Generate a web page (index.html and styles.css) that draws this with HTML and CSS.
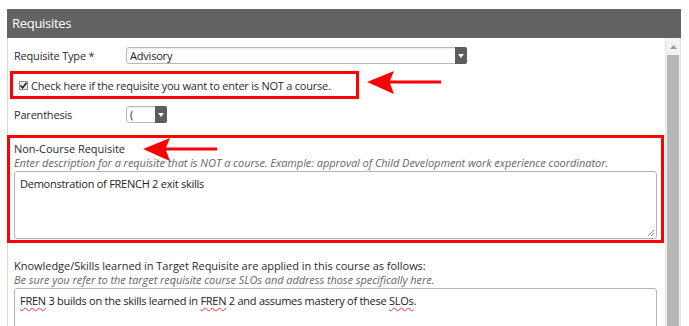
FILE: index.html
```html
<!DOCTYPE html>
<html>
<head>
<meta charset="utf-8">
<link rel="stylesheet" href="styles.css">
</head>
<body>
<div class="page">
  <div class="header">Requisites</div>
  <div class="panel">
    <div class="content">
      <div class="row row-type">
        <span class="lbl">Requisite Type *</span>
        <div class="select select-wide">
          <span class="val">Advisory</span>
          <span class="btn"><svg width="6" height="4" viewBox="0 0 6 4"><path d="M0 0H6L3 4Z" fill="#fff"/></svg></span>
        </div>
      </div>
      <div class="mark mark-check">
        <span class="cb"><svg width="9" height="9" viewBox="0 0 9 9"><path d="M1.5 4.5L3.6 6.8L7.6 1.8" fill="none" stroke="#222" stroke-width="1.6"/></svg></span>
        <span class="cbtext">Check here if the requisite you want to enter is NOT a course.</span>
      </div>
      <div class="row row-paren">
        <span class="lbl">Parenthesis</span>
        <div class="select select-narrow">
          <span class="val">(</span>
          <span class="btn"><svg width="6" height="4" viewBox="0 0 6 4"><path d="M0 0H6L3 4Z" fill="#fff"/></svg></span>
        </div>
      </div>
      <div class="mark mark-noncourse">
        <div class="flabel">Non-Course Requisite</div>
        <div class="hint">Enter description for a requisite that is NOT a course. Example: approval of Child Development work experience coordinator.</div>
        <div class="ta ta-noncourse">Demonstration of FRENCH 2 exit skills
          <svg class="grip" width="8" height="8" viewBox="0 0 8 8"><path d="M7 1L1 7M7 4L4 7" stroke="#888" stroke-width="1"/></svg>
        </div>
      </div>
      <div class="field">
        <div class="flabel">Knowledge/Skills learned in Target Requisite are applied in this course as follows:</div>
        <div class="hint">Be sure you refer to the target requisite course SLOs and address those specifically here.</div>
        <div class="ta ta-skills"><span class="sp">FREN</span> 3 builds on the skills learned in <span class="sp">FREN</span> 2 and assumes mastery of these <span class="sp">SLOs</span>.</div>
      </div>
    </div>
    <div class="scrollbar">
      <div class="sb-up"><svg width="7" height="4" viewBox="0 0 7 4"><path d="M0 4H7L3.5 0Z" fill="#999"/></svg></div>
      <div class="sb-thumb"></div>
    </div>
  </div>
  <svg class="arrow arrow-check" width="76" height="24" viewBox="0 0 76 24"><path d="M0 11L27 0L23 9.5H74V12.5H23L27 23Z" fill="#f00"/></svg>
  <svg class="arrow arrow-noncourse" width="76" height="24" viewBox="0 0 76 24"><path d="M0 11L27 0L23 9.5H74V12.5H23L27 23Z" fill="#f00"/></svg>
</div>
</body>
</html>
```
FILE: styles.css
```css
html, body {
  margin: 0;
  padding: 0;
  background: #fff;
}
.page {
  position: relative;
  width: 689px;
  height: 326px;
  overflow: hidden;
  padding-top: 9px;
  box-sizing: border-box;
  font-family: "Open Sans", "Noto Sans", sans-serif;
  font-size: 11px;
  color: #2b2b2b;
}
.header {
  margin-left: 7px;
  width: 674px;
  height: 29px;
  box-sizing: border-box;
  background: #636363;
  color: #fff;
  font-size: 13px;
  line-height: 29px;
  padding-left: 5px;
  letter-spacing: -0.3px;
}
.panel {
  margin-left: 7px;
  width: 674px;
  height: 288px;
  display: flex;
  border-left: 1px solid #d9d9d9;
  box-sizing: border-box;
}
.content {
  flex: 1;
  min-width: 0;
}
.row {
  display: grid;
  grid-template-columns: 112px auto;
  align-items: center;
  padding-left: 6px;
  height: 17px;
}
.row-type { margin-top: 9px; }
.row-paren { margin-top: 7px; }
.lbl {
  letter-spacing: -0.2px;
}
.select {
  height: 17px;
  box-sizing: border-box;
  border: 1px solid #b9b9b9;
  border-radius: 3px;
  display: flex;
  align-items: stretch;
  background: #fff;
  box-shadow: inset 0 1px 1px rgba(0,0,0,0.08);
}
.select-wide { width: 341px; }
.select-narrow { width: 41px; }
.select .val {
  flex: 1;
  padding-left: 3px;
  line-height: 15px;
  color: #222;
  letter-spacing: -0.2px;
}
.select .btn {
  width: 12px;
  background: #5d5d5d;
  border-radius: 0 2px 2px 0;
  margin: -1px -1px -1px 0;
  display: flex;
  align-items: center;
  justify-content: center;
}
.mark {
  border: 3px solid #f00;
  box-sizing: border-box;
}
.mark-check {
  margin-top: 7px;
  margin-left: 2px;
  width: 349px;
  height: 28px;
  display: flex;
  align-items: center;
  padding-left: 6px;
  gap: 3px;
}
.cb {
  width: 9px;
  height: 9px;
  box-sizing: border-box;
  border: 1px solid #8c8c8c;
  background: #e9e9e9;
  display: flex;
  margin-top: 1px;
}
.cb svg { margin: -1px; }
.cbtext {
  letter-spacing: -0.23px;
}
.mark-noncourse {
  margin-top: 12px;
  margin-left: -1px;
  width: 657px;
  height: 108px;
  padding: 4px 4px 0;
}
.flabel {
  line-height: 14px;
  height: 14px;
  white-space: nowrap;
  letter-spacing: -0.03px;
}
.hint {
  font-style: italic;
  color: #666;
  line-height: 14px;
  height: 14px;
  white-space: nowrap;
  letter-spacing: -0.06px;
}
.ta {
  position: relative;
  margin-top: 1px;
  border: 1px solid #b5b5b5;
  border-radius: 3px;
  box-sizing: border-box;
  padding: 5px 5px;
  line-height: 14px;
  color: #222;
  letter-spacing: -0.26px;
}
.ta-noncourse {
  height: 68px;
}
.grip {
  position: absolute;
  right: 1px;
  bottom: 1px;
}
.field {
  margin-top: 16px;
  padding-left: 6px;
  padding-right: 8px;
}
.ta-skills {
  height: 60px;
}
.sp {
  text-decoration: underline wavy #e33;
  text-decoration-thickness: 1px;
  text-underline-offset: 2px;
}
.scrollbar {
  width: 16px;
  box-sizing: border-box;
  border-left: 1px solid #e2e2e2;
  border-right: 1px solid #e2e2e2;
  background: #f3f3f3;
  display: flex;
  flex-direction: column;
  align-items: center;
}
.sb-up {
  height: 17px;
  display: flex;
  align-items: center;
  justify-content: center;
}
.sb-thumb {
  width: 12px;
  flex: 1;
  background: #b7b7b7;
}
.arrow {
  position: absolute;
}
.arrow-check {
  left: 367px;
  top: 71px;
}
.arrow-noncourse {
  left: 143px;
  top: 138px;
}
```
